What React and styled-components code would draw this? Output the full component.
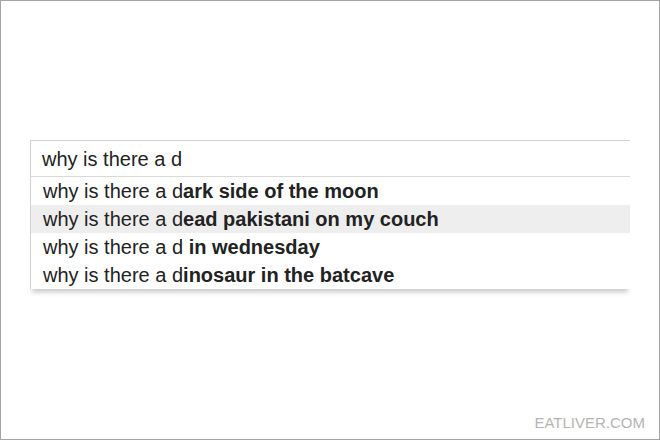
import React from "react";
import styled, { createGlobalStyle } from "styled-components";

const Global = createGlobalStyle`
  html, body { margin: 0; padding: 0; background: #fff; }
  body { font-family: "Liberation Sans", Arial, sans-serif; }
`;

const Frame = styled.div`
  box-sizing: border-box;
  width: 660px;
  height: 440px;
  border: 1px solid #a3a3a3;
  background: #fff;
  display: flex;
  flex-direction: column;
  padding: 139px 0 0 29px;
`;

const Search = styled.div`
  width: 600px;
  display: flex;
  flex-direction: column;
`;

const Input = styled.div`
  box-sizing: border-box;
  height: 37px;
  border-top: 1px solid #d2d2d2;
  border-left: 1px solid #d2d2d2;
  border-bottom: 1px solid #d9d9d9;
  padding-left: 11px;
  display: flex;
  align-items: center;
  font-size: 20px;
  color: #222;
  padding-top: 1px;
`;

const Dropdown = styled.div`
  border-left: 1px solid #d2d2d2;
  box-shadow: 0 5px 5px -2px rgba(0, 0, 0, 0.22);
  clip-path: inset(0 0 -12px 0);
  display: flex;
  flex-direction: column;
`;

const Row = styled.div`
  height: 28px;
  display: flex;
  align-items: center;
  padding-left: 12px;
  font-size: 20px;
  color: #222;
  white-space: pre;
  background: ${(p) => (p.$active ? "#eeeeee" : "#fff")};
`;

const Bold = styled.b`
  font-weight: 700;
`;

const Watermark = styled.div`
  margin-top: auto;
  align-self: flex-end;
  margin-right: 14px;
  margin-bottom: 8px;
  font-size: 15px;
  color: #b4b4b4;
`;

const items = [
  { rest: "ark side of the moon" },
  { rest: "ead pakistani on my couch", active: true },
  { rest: " in wednesday" },
  { rest: "inosaur in the batcave" },
];

export default function App() {
  return (
    <>
      <Global />
      <Frame>
        <Search>
          <Input>why is there a d</Input>
          <Dropdown>
            {items.map((it, i) => (
              <Row key={i} $active={it.active}>
                why is there a d<Bold>{it.rest}</Bold>
              </Row>
            ))}
          </Dropdown>
        </Search>
        <Watermark>EATLIVER.COM</Watermark>
      </Frame>
    </>
  );
}
